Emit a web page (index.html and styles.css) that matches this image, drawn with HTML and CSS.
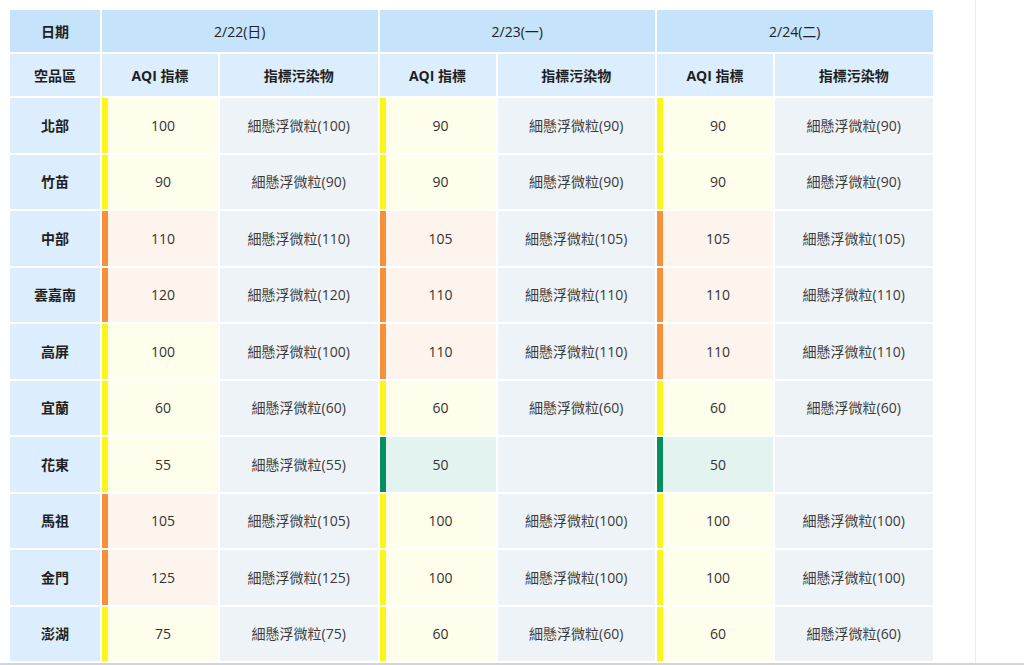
FILE: index.html
```html
<!DOCTYPE html>
<html lang="zh-Hant">
<head>
<meta charset="utf-8">
<title>AQI</title>
<link rel="stylesheet" href="styles.css">
</head>
<body>
<div class="frame">
  <div class="pane">
    <table class="aqi">
      <colgroup>
        <col class="c-region">
        <col class="c-aqi"><col class="c-pol">
        <col class="c-aqi"><col class="c-pol">
        <col class="c-aqi"><col class="c-pol">
      </colgroup>
      <thead>
        <tr class="h1">
          <th>日期</th>
          <th colspan="2" class="day">2/22(日)</th>
          <th colspan="2" class="day">2/23(一)</th>
          <th colspan="2" class="day">2/24(二)</th>
        </tr>
        <tr class="h2">
          <th>空品區</th>
          <th>AQI 指標</th><th>指標污染物</th>
          <th>AQI 指標</th><th>指標污染物</th>
          <th>AQI 指標</th><th>指標污染物</th>
        </tr>
      </thead>
      <tbody>
        <tr><th>北部</th>
          <td class="v y">100</td><td class="p">細懸浮微粒(100)</td>
          <td class="v y">90</td><td class="p">細懸浮微粒(90)</td>
          <td class="v y">90</td><td class="p">細懸浮微粒(90)</td></tr>
        <tr><th>竹苗</th>
          <td class="v y">90</td><td class="p">細懸浮微粒(90)</td>
          <td class="v y">90</td><td class="p">細懸浮微粒(90)</td>
          <td class="v y">90</td><td class="p">細懸浮微粒(90)</td></tr>
        <tr><th>中部</th>
          <td class="v o">110</td><td class="p">細懸浮微粒(110)</td>
          <td class="v o">105</td><td class="p">細懸浮微粒(105)</td>
          <td class="v o">105</td><td class="p">細懸浮微粒(105)</td></tr>
        <tr><th>雲嘉南</th>
          <td class="v o">120</td><td class="p">細懸浮微粒(120)</td>
          <td class="v o">110</td><td class="p">細懸浮微粒(110)</td>
          <td class="v o">110</td><td class="p">細懸浮微粒(110)</td></tr>
        <tr><th>高屏</th>
          <td class="v y">100</td><td class="p">細懸浮微粒(100)</td>
          <td class="v o">110</td><td class="p">細懸浮微粒(110)</td>
          <td class="v o">110</td><td class="p">細懸浮微粒(110)</td></tr>
        <tr><th>宜蘭</th>
          <td class="v y">60</td><td class="p">細懸浮微粒(60)</td>
          <td class="v y">60</td><td class="p">細懸浮微粒(60)</td>
          <td class="v y">60</td><td class="p">細懸浮微粒(60)</td></tr>
        <tr><th>花東</th>
          <td class="v y">55</td><td class="p">細懸浮微粒(55)</td>
          <td class="v g">50</td><td class="p"></td>
          <td class="v g">50</td><td class="p"></td></tr>
        <tr><th>馬祖</th>
          <td class="v o">105</td><td class="p">細懸浮微粒(105)</td>
          <td class="v y">100</td><td class="p">細懸浮微粒(100)</td>
          <td class="v y">100</td><td class="p">細懸浮微粒(100)</td></tr>
        <tr><th>金門</th>
          <td class="v o">125</td><td class="p">細懸浮微粒(125)</td>
          <td class="v y">100</td><td class="p">細懸浮微粒(100)</td>
          <td class="v y">100</td><td class="p">細懸浮微粒(100)</td></tr>
        <tr><th>澎湖</th>
          <td class="v y">75</td><td class="p">細懸浮微粒(75)</td>
          <td class="v y">60</td><td class="p">細懸浮微粒(60)</td>
          <td class="v y">60</td><td class="p">細懸浮微粒(60)</td></tr>
      </tbody>
    </table>
  </div>
</div>
</body>
</html>
```

FILE: styles.css
```css
html, body {
  margin: 0;
  padding: 0;
  background: #ffffff;
}

body {
  font-family: "Open Sans", "Noto Sans CJK TC", sans-serif;
  font-size: 14px;
  color: #333333;
  overflow: hidden;
}

.frame {
  height: 663px;
  border-bottom: 2px solid #d4d4d4;
}

.pane {
  width: 976px;
  height: 663px;
  box-sizing: border-box;
  padding: 8px;
  border-right: 1px solid #ececec;
}

.aqi {
  border-collapse: separate;
  border-spacing: 2px;
  table-layout: fixed;
  width: 924.5px;
}

.c-region { width: 90px; }
.c-aqi { width: 116px; }
.c-pol { width: 157.5px; }

.aqi th,
.aqi td {
  padding: 1px 0 0 0;
  text-align: center;
  vertical-align: middle;
  box-sizing: border-box;
  line-height: 20px;
}

.aqi th {
  font-weight: bold;
  color: #1f1f1f;
}

.h1 th {
  height: 42px;
  background: #c5e3fa;
}

.h1 th.day {
  font-weight: normal;
  color: #222222;
}

.h2 th {
  height: 42px;
  background: #dceefd;
}

.aqi tbody th {
  height: 54.5px;
  background: #dceefd;
}

.aqi tbody td {
  height: 54.5px;
}

.aqi td.v {
  border-left-width: 6px;
  border-left-style: solid;
}

.aqi td.y {
  border-left-color: #fbf51c;
  background: #fffeec;
}

.aqi td.o {
  border-left-color: #f6913a;
  background: #fdf4ed;
}

.aqi td.g {
  border-left-color: #058e60;
  background: #e3f3ef;
}

.aqi td.p {
  background: #eef3f8;
  color: #3a3a3a;
}
```
